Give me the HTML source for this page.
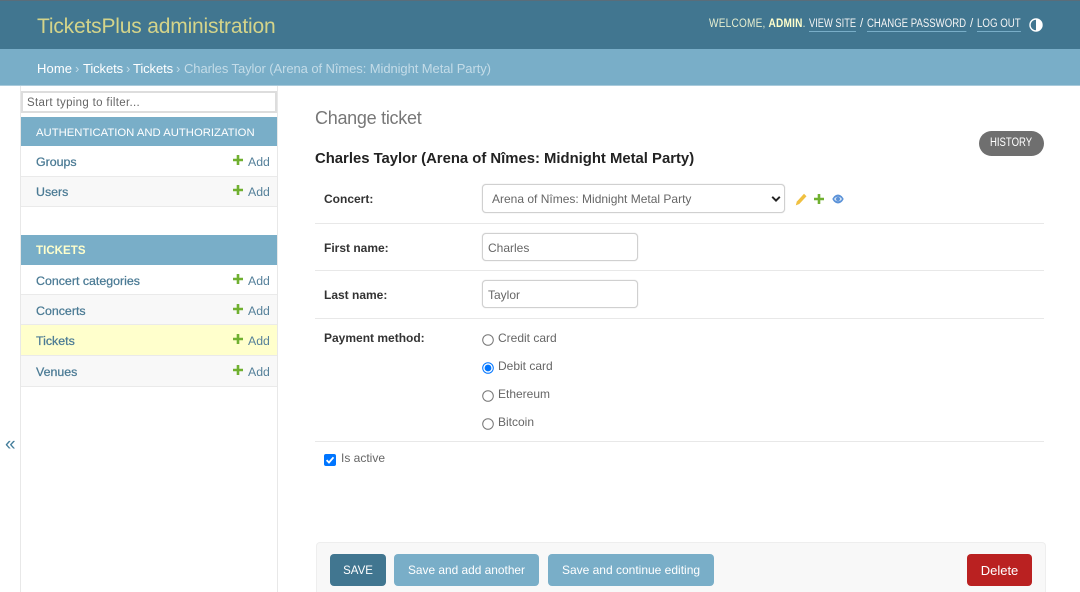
<!DOCTYPE html>
<html lang="en"><head><meta charset="utf-8"><title>Change ticket</title>
<style>
*{box-sizing:border-box}
html,body{margin:0;padding:0;width:1080px;height:592px;overflow:hidden;background:#fff;font-family:"Liberation Sans",sans-serif;color:#333}
.a{position:absolute;white-space:nowrap;line-height:1}
.b{position:absolute}
.side{color:#4a7a94;font-size:12.4px;font-weight:400;-webkit-text-stroke:.25px #4a7a94}
.add{color:#55809a;font-size:12.3px;left:248px}
.lab{font-size:12px;font-weight:700;color:#333}
.val{font-size:12px;color:#666}
.row{position:absolute;left:21px;width:256px;height:31px;border-bottom:1px solid #eaeaea}
.hr{position:absolute;left:315px;width:729px;height:1px;background:#e8e8e8}
.inp{position:absolute;background:#fff;border:1px solid #d0d0d0;border-radius:4px;box-shadow:0 0 1px #ccc}
.btn{position:absolute;top:554px;height:32px;border-radius:4px;color:#fff;font-size:12px;line-height:33px;text-align:center;background:#79aec8}
.hd{font-size:11.5px;color:#f5f5f5;line-height:13px;border-bottom:1px solid #79aec8;transform-origin:left top}
.p{stroke:#70b030;stroke-width:2.600}
</style></head><body>
<div class="b" style="left:0;top:0;width:1080px;height:49px;background:#417690;border-top:1px solid #5a6d7a"></div>
<div class="b" style="left:0;top:49px;width:1080px;height:37px;background:#79aec8;border-bottom:1px solid #a9cadb"></div>
<div class="a" style="left:37px;top:16px;font-size:21px;color:#d4d48a;letter-spacing:-.18px">TicketsPlus administration</div>
<div class="a" style="left:709px;top:19px;font-size:11.5px;color:#e6eed0;letter-spacing:.25px;transform:scaleX(.875);transform-origin:left top">WELCOME, <b style="color:#ffc">ADMIN</b>.</div>
<div class="a hd" style="left:809px;top:18px;transform:scaleX(.81)">VIEW SITE</div>
<div class="a" style="left:860px;top:19px;font-size:11.5px;color:#f5f5f5">/</div>
<div class="a hd" style="left:867px;top:18px;transform:scaleX(.835)">CHANGE PASSWORD</div>
<div class="a" style="left:970px;top:19px;font-size:11.5px;color:#f5f5f5">/</div>
<div class="a hd" style="left:977px;top:18px;transform:scaleX(.845)">LOG OUT</div>
<svg class="b" style="left:1029px;top:18px" width="14" height="14" viewBox="0 0 14 14"><circle cx="7" cy="7" r="6" fill="#417690" stroke="#fff" stroke-width="1.400"/><path d="M7 1a6 6 0 0 1 0 12z" fill="#fff"/></svg>

<div class="a" style="left:37px;top:62px;font-size:13px;color:#fff;letter-spacing:.1px">Home</div>
<div class="a" style="left:75px;top:62px;font-size:13px;color:#c4dce8">›</div>
<div class="a" style="left:83px;top:62px;font-size:13px;color:#fff;letter-spacing:-.1px">Tickets</div>
<div class="a" style="left:126px;top:62px;font-size:13px;color:#c4dce8">›</div>
<div class="a" style="left:133px;top:62px;font-size:13px;color:#fff;letter-spacing:-.1px">Tickets</div>
<div class="a" style="left:176px;top:62px;font-size:13px;color:#c4dce8">›</div>
<div class="a" style="left:184px;top:62px;font-size:13px;color:#c4dce8;letter-spacing:-.08px">Charles Taylor (Arena of Nîmes: Midnight Metal Party)</div>

<div class="b" style="left:20px;top:86px;width:1px;height:506px;background:#e8e8e8"></div>
<div class="b" style="left:277px;top:86px;width:1px;height:506px;background:#e8e8e8"></div>
<div class="b" style="left:21px;top:91px;width:256px;height:22px;border:2px solid #ddd;background:#fff"></div>
<div class="a" style="left:27px;top:98px;font-size:11.5px;color:#666;letter-spacing:.33px">Start typing to filter...</div>

<div class="b" style="left:21px;top:117px;width:256px;height:29px;background:#79aec8"></div>
<div class="a" style="left:36px;top:128px;font-size:11.3px;color:#fff">AUTHENTICATION AND AUTHORIZATION</div>
<div class="row" style="top:146px"></div>
<div class="row" style="top:177px;height:30px;background:#f8f8f8"></div>
<div class="a side" style="left:36px;top:156px">Groups</div><div class="a add" style="top:156px">Add</div>
<div class="a side" style="left:36px;top:186px">Users</div><div class="a add" style="top:186px">Add</div>

<div class="b" style="left:21px;top:235px;width:256px;height:30px;background:#79aec8"></div>
<div class="a" style="left:36px;top:246px;font-size:11.5px;font-weight:700;color:#ffc;letter-spacing:.05px">TICKETS</div>
<div class="row" style="top:265px;height:30px"></div>
<div class="row" style="top:295px;height:30px;background:#f8f8f8"></div>
<div class="row" style="top:325px;height:31px;background:#ffc"></div>
<div class="row" style="top:356px;height:31px;background:#f8f8f8"></div>
<div class="a side" style="left:36px;top:275px">Concert categories</div><div class="a add" style="top:275px">Add</div>
<div class="a side" style="left:36px;top:305px">Concerts</div><div class="a add" style="top:305px">Add</div>
<div class="a side" style="left:36px;top:335px">Tickets</div><div class="a add" style="top:335px">Add</div>
<div class="a side" style="left:36px;top:366px">Venues</div><div class="a add" style="top:366px">Add</div>
<svg class="b" style="left:233px;top:155px" width="10" height="10" viewBox="0 0 10 10"><path class="p" d="M5 0v10M0 5h10"/></svg>
<svg class="b" style="left:233px;top:185px" width="10" height="10" viewBox="0 0 10 10"><path class="p" d="M5 0v10M0 5h10"/></svg>
<svg class="b" style="left:233px;top:274px" width="10" height="10" viewBox="0 0 10 10"><path class="p" d="M5 0v10M0 5h10"/></svg>
<svg class="b" style="left:233px;top:304px" width="10" height="10" viewBox="0 0 10 10"><path class="p" d="M5 0v10M0 5h10"/></svg>
<svg class="b" style="left:233px;top:334px" width="10" height="10" viewBox="0 0 10 10"><path class="p" d="M5 0v10M0 5h10"/></svg>
<svg class="b" style="left:233px;top:365px" width="10" height="10" viewBox="0 0 10 10"><path class="p" d="M5 0v10M0 5h10"/></svg>
<div class="a" style="left:5px;top:435px;font-size:19px;color:#447e9b">«</div>

<div class="a" style="left:315px;top:109px;font-size:18px;color:#777;letter-spacing:-.28px">Change ticket</div>
<div class="b" style="left:979px;top:131px;width:65px;height:25px;border-radius:13px;background:#6f6f6f"></div>
<div class="a" style="left:990px;top:138px;font-size:11.5px;color:#fff;transform:scaleX(.83);transform-origin:left top">HISTORY</div>
<div class="a" style="left:315px;top:152px;font-size:14.85px;font-weight:700;color:#222">Charles Taylor (Arena of Nîmes: Midnight Metal Party)</div>

<div class="a lab" style="left:324px;top:193px">Concert:</div>
<div class="inp" style="left:482px;top:184px;width:303px;height:29px"></div>
<div class="a val" style="left:492px;top:193px">Arena of Nîmes: Midnight Metal Party</div>
<svg class="b" style="left:771px;top:195px" width="10" height="8" viewBox="0 0 10 8"><path d="M1.200 1.800 5 5.600l3.800-3.800" fill="none" stroke="#222" stroke-width="1.900"/></svg>
<svg class="b" style="left:795px;top:193px" width="12" height="13" viewBox="0 0 12 13"><path d="M9 .8 11.500 3.300 4.300 11 .8 12.400l1-3.800z" fill="#f0c040"/></svg>
<svg class="b" style="left:814px;top:194px" width="10" height="10" viewBox="0 0 10 10"><path class="p" d="M5 0v10M0 5h10"/></svg>
<svg class="b" style="left:832px;top:194px" width="12" height="10" viewBox="0 0 12 10"><path d="M.3 5C2 1.700 4 .6 6 .6s4 1.100 5.700 4.400C10 8.300 8 9.400 6 9.400S2 8.300.3 5z" fill="#5b92d8"/><path d="M2 5C3 3.400 4.200 2.700 6 2.700s3 .7 4 2.300c-1 1.600-2.200 2.300-4 2.300S3 6.600 2 5z" fill="#d5e4f5"/><circle cx="6" cy="5" r="2" fill="#5b92d8"/></svg>
<div class="hr" style="top:223px"></div>

<div class="a lab" style="left:324px;top:242px">First name:</div>
<div class="inp" style="left:482px;top:233px;width:156px;height:28px"></div>
<div class="a val" style="left:488px;top:242px">Charles</div>
<div class="hr" style="top:270px"></div>

<div class="a lab" style="left:324px;top:289px">Last name:</div>
<div class="inp" style="left:482px;top:280px;width:156px;height:28px"></div>
<div class="a val" style="left:488px;top:289px">Taylor</div>
<div class="hr" style="top:318px"></div>

<div class="a lab" style="left:324px;top:332px">Payment method:</div>
<svg class="b" style="left:482px;top:334px" width="12" height="12"><circle cx="6" cy="6" r="5.300" fill="#fff" stroke="#767676"/></svg>
<div class="a val" style="left:498px;top:332px">Credit card</div>
<svg class="b" style="left:482px;top:362px" width="12" height="12"><circle cx="6" cy="6" r="5.300" fill="#fff" stroke="#0075ff"/><circle cx="6" cy="6" r="3.400" fill="#0075ff"/></svg>
<div class="a val" style="left:498px;top:360px">Debit card</div>
<svg class="b" style="left:482px;top:390px" width="12" height="12"><circle cx="6" cy="6" r="5.300" fill="#fff" stroke="#767676"/></svg>
<div class="a val" style="left:498px;top:388px">Ethereum</div>
<svg class="b" style="left:482px;top:418px" width="12" height="12"><circle cx="6" cy="6" r="5.300" fill="#fff" stroke="#767676"/></svg>
<div class="a val" style="left:498px;top:416px">Bitcoin</div>
<div class="hr" style="top:441px"></div>

<svg class="b" style="left:324px;top:454px" width="12" height="12" viewBox="0 0 12 12"><rect width="12" height="12" rx="2" fill="#0075ff"/><path d="M2.600 6.100 5 8.500 9.500 3.300" fill="none" stroke="#fff" stroke-width="1.800"/></svg>
<div class="a val" style="left:341px;top:452px">Is active</div>

<div class="b" style="left:316px;top:542px;width:730px;height:50px;background:#f8f8f8;border:1px solid #eee;border-bottom:0;border-radius:4px 4px 0 0"></div>
<div class="btn" style="left:330px;width:56px;background:#417690;font-size:11.5px;line-height:34px">SAVE</div>
<div class="btn" style="left:394px;width:145px;font-size:11.9px">Save and add another</div>
<div class="btn" style="left:548px;width:166px;font-size:12px">Save and continue editing</div>
<div class="btn" style="left:967px;width:65px;background:#ba2121;font-size:13px">Delete</div>
</body></html>
